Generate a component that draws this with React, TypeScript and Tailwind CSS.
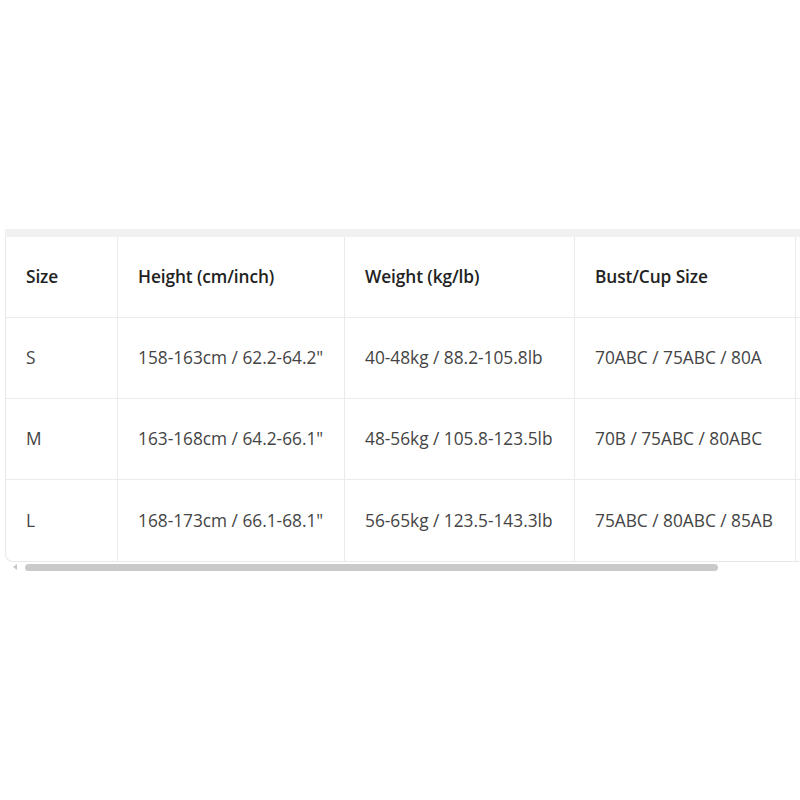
const rows = [
  ["S", "158-163cm / 62.2-64.2\"", "40-48kg / 88.2-105.8lb", "70ABC / 75ABC / 80A"],
  ["M", "163-168cm / 64.2-66.1\"", "48-56kg / 105.8-123.5lb", "70B / 75ABC / 80ABC"],
  ["L", "168-173cm / 66.1-68.1\"", "56-65kg / 123.5-143.3lb", "75ABC / 80ABC / 85AB"],
];

const widths = ["w-[112px]", "w-[227px]", "w-[230px]", "w-[221px]", "w-[120px]"];

export default function App() {
  return (
    <div className="w-[800px] h-[800px] bg-white overflow-hidden pt-[229px] pl-[5px]" style={{ fontFamily: '"Open Sans", "Noto Sans", sans-serif' }}>
      <div className="h-[8px] bg-[#f1f1f1]" />
      <div className="border-l border-b border-[#e8e8e8] rounded-bl-[8px] overflow-hidden">
        <div className="flex w-[910px] h-[81px] border-b border-[#ebebeb]">
          {["Size", "Height (cm/inch)", "Weight (kg/lb)", "Bust/Cup Size", ""].map((h, i) => (
            <div key={i} className={`${widths[i]} shrink-0 flex items-center pl-[20px] text-[17.3px] font-semibold text-[#222] tracking-[-0.1px] ${i < 4 ? "border-r border-[#ebebeb]" : ""}`}>
              {h}
            </div>
          ))}
        </div>
        {rows.map((r, ri) => (
          <div key={ri} className={`flex w-[910px] h-[81px] ${ri < 2 ? "border-b border-[#ebebeb]" : ""}`}>
            {[...r, ""].map((c, i) => (
              <div key={i} className={`${widths[i]} shrink-0 flex items-center pl-[20px] text-[17.3px] text-[#444] ${i < 4 ? "border-r border-[#ebebeb]" : ""}`}>
                {c}
              </div>
            ))}
          </div>
        ))}
      </div>
      <div className="flex items-center h-[10px]">
        <div className="w-[20px] flex justify-center">
          <div className="w-0 h-0 border-t-[3px] border-t-transparent border-b-[3px] border-b-transparent border-r-[4px] border-r-[#c8c8c8]" />
        </div>
        <div className="w-[693px] h-[7px] rounded-full bg-[#cacaca]" />
      </div>
    </div>
  );
}
